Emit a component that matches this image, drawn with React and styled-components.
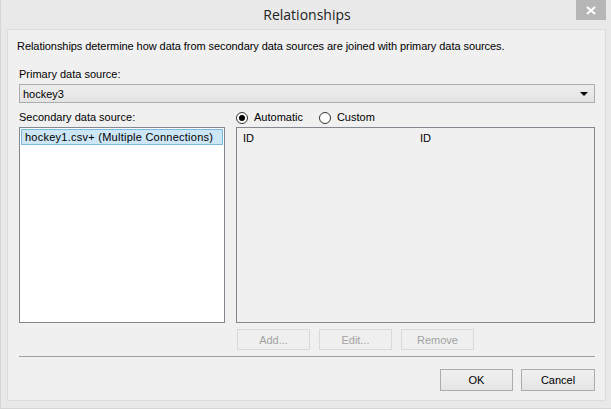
import styled, { createGlobalStyle } from "styled-components";

const GlobalStyle = createGlobalStyle`
  html, body {
    margin: 0;
    padding: 0;
    background: #e9e9e9;
  }
  body {
    font-family: "Liberation Sans", Arial, sans-serif;
    font-size: 11px;
    color: #000;
  }
`;

const Window = styled.div`
  width: 611px;
  height: 409px;
  box-sizing: border-box;
  background: #e9e9e9;
  border-left: 1px solid #d6d6d6;
  border-bottom: 1px solid #d6d6d6;
  display: flex;
  flex-direction: column;
`;

const TitleBar = styled.div`
  height: 29px;
  display: grid;
  grid-template-columns: 1fr auto 1fr;
  align-items: start;
`;

const Title = styled.div`
  grid-column: 2;
  font-family: "Open Sans", "Noto Sans", sans-serif;
  font-size: 14px;
  color: #222;
  line-height: 29px;
  margin-left: 2px;
`;

const CloseButton = styled.div`
  grid-column: 3;
  justify-self: end;
  margin-right: 5px;
  width: 30px;
  height: 20px;
  background: #b6b6b6;
  display: flex;
  align-items: center;
  justify-content: center;
`;

const Panel = styled.div`
  margin: 0 5px 0 6px;
  height: 372px;
  box-sizing: border-box;
  border: 1px solid #dcdcdc;
  background: #f0f0f0;
  padding: 0 10px 0 11px;
  display: flex;
  flex-direction: column;
`;

const Description = styled.div`
  margin: 10px 0 0 -2px;
  height: 13px;
  line-height: 13px;
  letter-spacing: -0.06px;
`;

const Label = styled.div`
  height: 13px;
  line-height: 13px;
  margin-top: ${(p) => p.$top}px;
`;

const Select = styled.div`
  margin-top: 3px;
  height: 19px;
  box-sizing: border-box;
  border: 1px solid #acacac;
  background: linear-gradient(#ededed, #e4e4e4);
  display: flex;
  align-items: center;
  justify-content: space-between;
  padding: 0 6px 0 3px;
`;

const Arrow = styled.span`
  width: 0;
  height: 0;
  border-left: 4px solid transparent;
  border-right: 4px solid transparent;
  border-top: 4px solid #000;
`;

const Columns = styled.div`
  display: grid;
  grid-template-columns: 206px 359px;
  column-gap: 11px;
  margin-top: 8px;
`;

const HeaderRow = styled.div`
  height: 13px;
  line-height: 13px;
  display: flex;
  align-items: center;
  gap: 16px;
`;

const RadioOption = styled.label`
  display: flex;
  align-items: center;
  gap: 6px;
`;

const RadioCircle = styled.span`
  width: 12px;
  height: 12px;
  box-sizing: border-box;
  border-radius: 50%;
  border: 1px solid #333;
  background: #fff;
  display: flex;
  align-items: center;
  justify-content: center;
  &::after {
    content: "";
    width: 6px;
    height: 6px;
    border-radius: 50%;
    background: ${(p) => (p.$checked ? "#000" : "transparent")};
  }
`;

const ListBox = styled.div`
  margin-top: 3px;
  height: 196px;
  box-sizing: border-box;
  border: 1px solid #828790;
  background: ${(p) => (p.$muted ? "#f0f0f0" : "#fff")};
  padding: 1px;
`;

const ListItem = styled.div`
  height: 16px;
  box-sizing: border-box;
  border: 1px solid #7db8df;
  background: #cce6f6;
  line-height: 14px;
  padding-left: 3px;
  letter-spacing: 0.25px;
`;

const PairRow = styled.div`
  display: grid;
  grid-template-columns: 177px 1fr;
  padding: 3px 0 0 5px;
  line-height: 13px;
`;

const ActionRow = styled.div`
  display: flex;
  gap: 9px;
  margin: 6px 0 0 218px;
`;

const Button = styled.button`
  width: ${(p) => p.$w || 73}px;
  height: ${(p) => (p.$disabled ? 21 : 22)}px;
  box-sizing: border-box;
  padding: 0;
  font-family: inherit;
  font-size: 11px;
  border: 1px solid ${(p) => (p.$disabled ? "#d9d9d9" : "#acacac")};
  background: ${(p) =>
    p.$disabled ? "#efefef" : "linear-gradient(#f0f0f0, #e5e5e5)"};
  color: ${(p) => (p.$disabled ? "#a3a3a3" : "#000")};
`;

const Separator = styled.hr`
  margin: 6px 0 0 0;
  border: none;
  border-top: 1px solid #a0a0a0;
  height: 0;
`;

const FooterRow = styled.div`
  display: flex;
  justify-content: flex-end;
  gap: 8px;
  margin-top: 12px;
`;

export default function App() {
  return (
    <>
      <GlobalStyle />
      <Window>
        <TitleBar>
          <Title>Relationships</Title>
          <CloseButton>
            <svg width="10" height="9" viewBox="0 0 10 9">
              <path d="M1 1 L9 8 M9 1 L1 8" stroke="#fff" strokeWidth="2" />
            </svg>
          </CloseButton>
        </TitleBar>
        <Panel>
          <Description>
            Relationships determine how data from secondary data sources are
            joined with primary data sources.
          </Description>
          <Label $top={15}>Primary data source:</Label>
          <Select>
            <span>hockey3</span>
            <Arrow />
          </Select>
          <Columns>
            <div>
              <HeaderRow>Secondary data source:</HeaderRow>
              <ListBox>
                <ListItem>hockey1.csv+ (Multiple Connections)</ListItem>
              </ListBox>
            </div>
            <div>
              <HeaderRow>
                <RadioOption>
                  <RadioCircle $checked />
                  Automatic
                </RadioOption>
                <RadioOption>
                  <RadioCircle />
                  Custom
                </RadioOption>
              </HeaderRow>
              <ListBox $muted>
                <PairRow>
                  <span>ID</span>
                  <span>ID</span>
                </PairRow>
              </ListBox>
            </div>
          </Columns>
          <ActionRow>
            <Button $disabled>Add...</Button>
            <Button $disabled>Edit...</Button>
            <Button $disabled>Remove</Button>
          </ActionRow>
          <Separator />
          <FooterRow>
            <Button $w={73}>OK</Button>
            <Button $w={74}>Cancel</Button>
          </FooterRow>
        </Panel>
      </Window>
    </>
  );
}
